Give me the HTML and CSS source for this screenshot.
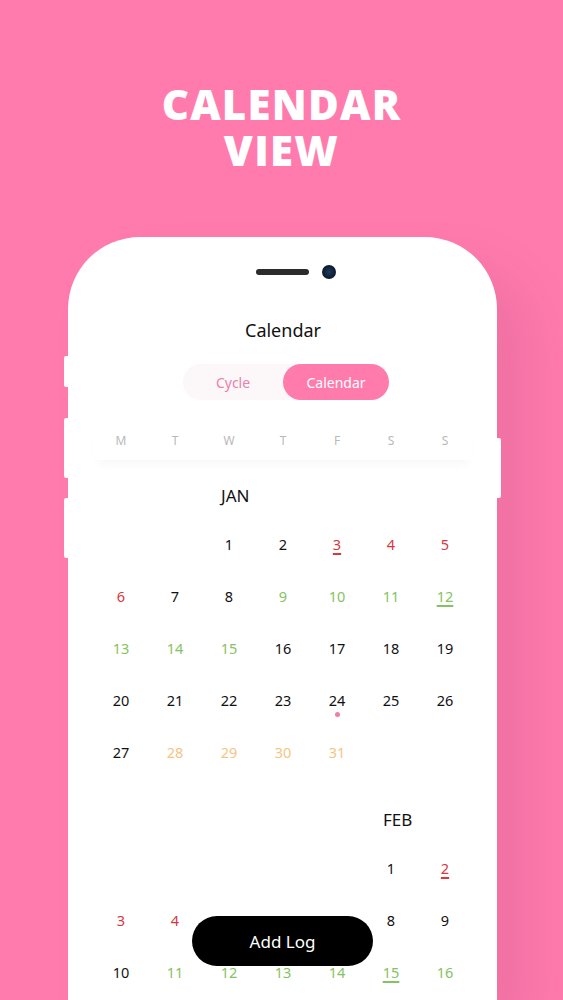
FILE: index.html
```html
<!DOCTYPE html>
<html>
<head>
<meta charset="utf-8">
<link rel="stylesheet" href="styles.css">
</head>
<body>
<h1 class="title"><span class="line">CALENDAR</span><span class="line">VIEW</span></h1>
<div class="phone">
  <span class="side-btn left b1"></span>
  <span class="side-btn left b2"></span>
  <span class="side-btn left b3"></span>
  <span class="side-btn right b4"></span>
  <div class="notch"><span class="speaker"></span><span class="camera"></span></div>
  <div class="screen">
    <div class="header">Calendar</div>
    <div class="toggle-wrap">
      <div class="toggle">
        <span class="tab">Cycle</span>
        <span class="tab active">Calendar</span>
      </div>
    </div>
    <div class="weekdays">
      <span>M</span><span>T</span><span>W</span><span>T</span><span>F</span><span>S</span><span>S</span>
    </div>
    <div class="month">
      <div class="month-label start-3">JAN</div>
      <div class="days">
        <span class="d start-3">1</span><span class="d">2</span><span class="d red u">3</span><span class="d red">4</span><span class="d red">5</span>
        <span class="d red">6</span><span class="d">7</span><span class="d">8</span><span class="d green">9</span><span class="d green">10</span><span class="d green">11</span><span class="d green u">12</span>
        <span class="d green">13</span><span class="d green">14</span><span class="d green">15</span><span class="d">16</span><span class="d">17</span><span class="d">18</span><span class="d">19</span>
        <span class="d">20</span><span class="d">21</span><span class="d">22</span><span class="d">23</span><span class="d dot">24</span><span class="d">25</span><span class="d">26</span>
        <span class="d">27</span><span class="d orange">28</span><span class="d orange">29</span><span class="d orange">30</span><span class="d orange">31</span>
      </div>
    </div>
    <div class="month">
      <div class="month-label start-6">FEB</div>
      <div class="days">
        <span class="d start-6">1</span><span class="d red u">2</span>
        <span class="d red">3</span><span class="d red">4</span><span class="d red">5</span><span class="d red">6</span><span class="d">7</span><span class="d">8</span><span class="d">9</span>
        <span class="d">10</span><span class="d green">11</span><span class="d green">12</span><span class="d green">13</span><span class="d green">14</span><span class="d green u">15</span><span class="d green">16</span>
      </div>
    </div>
    <div class="bottom-fade"></div>
  </div>
  <button class="add-log">Add Log</button>
</div>
</body>
</html>
```
FILE: styles.css
```css
html, body {
  margin: 0;
  padding: 0;
}
body {
  width: 563px;
  height: 1000px;
  overflow: hidden;
  background: #ff7bad;
  font-family: "Noto Sans", "Liberation Sans", sans-serif;
}
.title {
  margin: 0;
  padding-top: 81px;
  height: 237px;
  box-sizing: border-box;
  text-align: center;
  color: #ffffff;
  font-family: "Open Sans", sans-serif;
  font-weight: 800;
  font-size: 42px;
  letter-spacing: 1.2px;
}
.title .line {
  display: block;
  height: 46px;
  line-height: 46px;
}
.phone {
  position: relative;
  margin-left: 68px;
  width: 429px;
  height: 763px;
  background: #ffffff;
  border-radius: 72px 72px 0 0;
  box-shadow: 34px 30px 50px rgba(140, 50, 100, 0.13);
}
.side-btn {
  position: absolute;
  width: 5px;
  background: #ffffff;
  border-radius: 2px;
}
.side-btn.left { left: -4px; }
.side-btn.right { right: -4px; }
.b1 { top: 119px; height: 31px; }
.b2 { top: 181px; height: 60px; }
.b3 { top: 261px; height: 60px; }
.b4 { top: 201px; height: 60px; }
.notch {
  display: flex;
  justify-content: center;
  align-items: center;
  gap: 13px;
  padding-left: 26px;
  padding-top: 28px;
  height: 14px;
}
.speaker {
  width: 53px;
  height: 6px;
  border-radius: 3px;
  background: #2b2b2d;
}
.camera {
  width: 14px;
  height: 14px;
  border-radius: 50%;
  background: radial-gradient(circle at 50% 50%, #1c3a5e 0, #0c1a2c 70%, #000 100%);
}
.screen {
  padding: 0 25px 0 26px;
}
.header {
  margin-top: 37px;
  height: 28px;
  line-height: 28px;
  text-align: center;
  font-size: 18px;
  color: #111;
}
.toggle-wrap {
  display: flex;
  justify-content: center;
  padding-left: 6px;
  margin-top: 20px;
}
.toggle {
  display: flex;
  width: 206px;
  height: 36px;
  border-radius: 18px;
  background: #fcf8fa;
}
.tab {
  flex: 1;
  display: flex;
  align-items: center;
  justify-content: center;
  font-size: 14px;
  color: #eb80a8;
  border-radius: 18px;
}
.tab.active {
  flex: 0 0 106px;
  background: #ff7bab;
  color: #ffffff;
}
.weekdays {
  display: grid;
  grid-template-columns: repeat(7, 54px);
  height: 40px;
  margin-top: 20px;
  align-items: center;
  font-size: 12px;
  color: #b9b9b9;
  box-shadow: 0 8px 10px -4px rgba(0, 0, 0, 0.035);
}
.weekdays span { text-align: center; }
.month {
  display: grid;
  grid-template-columns: repeat(7, 54px);
  margin-top: 14px;
}
.month + .month { margin-top: 20px; }
.month-label {
  grid-column-end: span 2;
  height: 44px;
  line-height: 44px;
  padding-left: 19px;
  font-size: 17px;
  color: #111;
}
.month-label.start-3 { grid-column-start: 3; }
.month-label.start-6 { grid-column-start: 6; grid-column-end: span 2; }
.days {
  grid-column: 1 / -1;
  display: grid;
  grid-template-columns: repeat(7, 54px);
  grid-auto-rows: 52px;
}
.d {
  position: relative;
  display: flex;
  align-items: center;
  justify-content: center;
  font-size: 14.5px;
  color: #111;
}
.d.start-3 { grid-column-start: 3; }
.d.start-6 { grid-column-start: 6; }
.red { color: #d8373e; }
.green { color: #85c262; }
.orange { color: #f4c583; }
.u {
  text-decoration: underline;
  text-decoration-thickness: 1.5px;
  text-underline-offset: 3px;
}
.dot::after {
  content: "";
  position: absolute;
  left: 50%;
  top: 38px;
  width: 5px;
  height: 5px;
  margin-left: -2.5px;
  border-radius: 50%;
  background: #ee7fa7;
}
.bottom-fade {
  height: 6px;
  margin-top: -10px;
  box-shadow: 0 6px 8px -3px rgba(0, 0, 0, 0.04);
}
.add-log {
  position: absolute;
  left: 124px;
  top: 679px;
  width: 181px;
  height: 50px;
  border: none;
  border-radius: 25px;
  background: #000;
  color: #fff;
  font-family: "Noto Sans", sans-serif;
  font-size: 17px;
}
```
